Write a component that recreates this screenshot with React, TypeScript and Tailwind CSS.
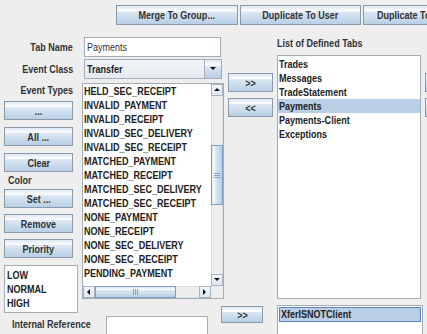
import React from "react";

const eventTypes = [
  "HELD_SEC_RECEIPT",
  "INVALID_PAYMENT",
  "INVALID_RECEIPT",
  "INVALID_SEC_DELIVERY",
  "INVALID_SEC_RECEIPT",
  "MATCHED_PAYMENT",
  "MATCHED_RECEIPT",
  "MATCHED_SEC_DELIVERY",
  "MATCHED_SEC_RECEIPT",
  "NONE_PAYMENT",
  "NONE_RECEIPT",
  "NONE_SEC_DELIVERY",
  "NONE_SEC_RECEIPT",
  "PENDING_PAYMENT",
];

const definedTabs = ["Trades", "Messages", "TradeStatement", "Payments", "Payments-Client", "Exceptions"];

// the swing font in the screenshot is tall and condensed, so squeeze it a bit
const T = ({ o = "left", children }: { o?: "left" | "right" | "center"; children?: React.ReactNode }) => {
  const origin = o === "left" ? "origin-left" : o === "right" ? "origin-right" : "origin-center";
  return <span className={`inline-block whitespace-nowrap scale-x-[0.82] ${origin}`}>{children}</span>;
};

const Btn = ({ className = "", children }: { className?: string; children?: React.ReactNode }) => (
  <button
    className={`flex shrink-0 items-center justify-center overflow-hidden whitespace-nowrap border border-[#8a9aab] bg-[linear-gradient(#dde8f3,#ffffff_30%,#dde8f3_31%,#b8cfe5)] font-bold text-[#333] ${className}`}
  >
    {children}
  </button>
);

const Arrow = ({ dir }: { dir: "up" | "down" | "left" | "right" }) => {
  const pts = {
    up: "1,5 4,2 7,5",
    down: "1,2 4,5 7,2",
    left: "5,1 2,4 5,7",
    right: "2,1 5,4 2,7",
  }[dir];
  return (
    <svg width="8" height="8" viewBox="0 0 8 8">
      <polygon points={pts} fill="#111" />
    </svg>
  );
};

const ScrollBtn = ({ dir }: { dir: "up" | "down" | "left" | "right" }) => (
  <div className="flex h-[12px] w-[12px] shrink-0 items-center justify-center border border-[#a8b4c0] bg-[linear-gradient(#f4f7fa,#dde8f3)]">
    <Arrow dir={dir} />
  </div>
);

export default function App() {
  return (
    <div className="h-[334px] w-[427px] overflow-hidden bg-[#eeeeee] font-['Liberation_Sans',Arial,sans-serif] text-[11px] leading-[14px] text-[#222]">
      {/* toolbar */}
      <div className="flex h-[25px] gap-[2px] pl-[116px] pt-[5px]">
        <Btn className="h-[20px] w-[122px]">
          <T o="center">Merge To Group...</T>
        </Btn>
        <Btn className="h-[20px] w-[121px]">
          <T o="center">Duplicate To User</T>
        </Btn>
        <Btn className="h-[20px] w-[121px] !justify-start pl-[13px]">
          <T>Duplicate To Tab</T>
        </Btn>
      </div>

      <div className="mt-[12px] flex">
        {/* left: form */}
        <div className="flex w-[224px] shrink-0 flex-col">
          <div className="flex h-[20px] items-center">
            <div className="w-[73px] text-right font-bold text-[#333]">
              <T o="right">Tab Name</T>
            </div>
            <div className="ml-[11px] flex h-[20px] w-[137px] items-center border border-[#a4adb6] bg-white pl-[2px] font-normal text-[#333]">
              <T>Payments</T>
            </div>
          </div>
          <div className="mt-[2px] flex h-[20px] items-center">
            <div className="w-[73px] text-right font-bold text-[#333]">
              <T o="right">Event Class</T>
            </div>
            <div className="ml-[11px] flex h-[20px] w-[138px] items-center border border-[#a4adb6] bg-[linear-gradient(#f2f5f8,#e4eaf0)]">
              <span className="flex-1 pl-[2px] font-bold text-[#222]">
                <T>Transfer</T>
              </span>
              <div className="flex h-full w-[17px] items-center justify-center border-l border-[#a4adb6] bg-[linear-gradient(#dde8f3,#ffffff_30%,#dde8f3_31%,#b8cfe5)]">
                <Arrow dir="down" />
              </div>
            </div>
          </div>

          <div className="mt-[4px] flex">
            <div className="flex w-[82px] shrink-0 flex-col">
              <div className="h-[14px] w-[73px] text-right font-bold text-[#333]">
                <T o="right">Event Types</T>
              </div>
              <div className="ml-[4px] mt-[4px] flex flex-col gap-[7px]">
                <Btn className="h-[19px] w-[69px]">
                  <T o="center">...</T>
                </Btn>
                <Btn className="h-[19px] w-[69px]">
                  <T o="center">All ...</T>
                </Btn>
                <Btn className="h-[19px] w-[69px]">
                  <T o="center">Clear</T>
                </Btn>
              </div>
              <div className="ml-[8px] mt-[1px] h-[14px] font-bold text-[#333]">
                <T>Color</T>
              </div>
              <div className="ml-[4px] mt-[2px] flex flex-col gap-[6px]">
                <Btn className="h-[19px] w-[69px]">
                  <T o="center">Set ...</T>
                </Btn>
                <Btn className="h-[19px] w-[69px]">
                  <T o="center">Remove</T>
                </Btn>
                <Btn className="h-[19px] w-[69px]">
                  <T o="center">Priority</T>
                </Btn>
              </div>
              <div className="ml-[4px] mt-[7px] h-[48px] w-[74px] border border-[#a4adb6] bg-white pl-[2px] pt-[2px] font-bold">
                <div>
                  <T>LOW</T>
                </div>
                <div>
                  <T>NORMAL</T>
                </div>
                <div>
                  <T>HIGH</T>
                </div>
              </div>
            </div>

            {/* event types list */}
            <div className="flex h-[216px] w-[142px] flex-col border border-[#a4adb6] bg-white">
              <div className="flex min-h-0 flex-1">
                <div className="flex-1 overflow-hidden pl-[1px] font-bold">
                  {eventTypes.map((t) => (
                    <div key={t} className="h-[14px]">
                      <T>{t}</T>
                    </div>
                  ))}
                </div>
                <div className="flex w-[12px] flex-col bg-[#eeeeee]">
                  <ScrollBtn dir="up" />
                  <div className="h-[49px] border-x border-[#d6dce2]" />
                  <div className="flex h-[60px] flex-col items-center justify-center gap-[1px] border border-[#7f9dc4] bg-[linear-gradient(to_right,#dde8f3,#ffffff_30%,#dde8f3_31%,#b8cfe5)]">
                    <div className="h-px w-[6px] bg-[#8aa3c4]" />
                    <div className="h-px w-[6px] bg-[#8aa3c4]" />
                    <div className="h-px w-[6px] bg-[#8aa3c4]" />
                  </div>
                  <div className="flex-1 border-x border-[#d6dce2]" />
                  <ScrollBtn dir="down" />
                </div>
              </div>
              <div className="flex h-[12px]">
                <ScrollBtn dir="left" />
                <div className="flex w-[81px] items-center justify-center gap-[1px] border border-[#7f9dc4] bg-[linear-gradient(#dde8f3,#ffffff_30%,#dde8f3_31%,#b8cfe5)]">
                  <div className="h-[6px] w-px bg-[#8aa3c4]" />
                  <div className="h-[6px] w-px bg-[#8aa3c4]" />
                  <div className="h-[6px] w-px bg-[#8aa3c4]" />
                </div>
                <div className="flex-1 border-y border-[#d6dce2] bg-[#eeeeee]" />
                <ScrollBtn dir="right" />
                <div className="w-[12px] bg-[#eeeeee]" />
              </div>
            </div>
          </div>

          <div className="mt-[3px] flex h-[20px] items-start">
            <div className="ml-[12px] w-[94px] pt-[1px] font-bold text-[#333]">
              <T>Internal Reference</T>
            </div>
            <div className="h-[20px] w-[102px] border border-[#a4adb6] bg-white" />
          </div>
        </div>

        {/* middle: move buttons */}
        <div className="flex w-[53px] shrink-0 flex-col">
          <Btn className="ml-[4px] mt-[36px] h-[19px] w-[45px]">
            <T o="center">&gt;&gt;</T>
          </Btn>
          <Btn className="ml-[4px] mt-[6px] h-[19px] w-[45px]">
            <T o="center">&lt;&lt;</T>
          </Btn>
          <Btn className="-ml-[3px] mt-[189px] h-[17px] w-[42px]">
            <T o="center">&gt;&gt;</T>
          </Btn>
        </div>

        {/* right: defined tabs */}
        <div className="flex w-[146px] shrink-0 flex-col">
          <div className="h-[18px] font-bold leading-[13px] text-[#333]">
            <T>List of Defined Tabs</T>
          </div>
          <div className="h-[244px] w-[144px] border border-[#a4adb6] bg-white pt-px font-bold">
            {definedTabs.map((t) => (
              <div key={t} className={`h-[14px] pl-[1px] ${t === "Payments" ? "bg-[#b8cfe5]" : ""}`}>
                <T>{t}</T>
              </div>
            ))}
          </div>
          <div className="mt-[6px] h-[40px] w-[146px] border border-[#a4adb6] bg-white p-px font-bold">
            <div className="h-[15px] border border-[#6382bf] bg-[#b8cfe5] pl-px leading-[13px]">
              <T>XferISNOTClient</T>
            </div>
          </div>
        </div>

        {/* partially visible column */}
        <div className="ml-[2px] flex flex-col">
          <Btn className="mt-[36px] h-[19px] w-[45px]" />
          <Btn className="mt-[6px] h-[19px] w-[45px]" />
        </div>
      </div>
    </div>
  );
}
